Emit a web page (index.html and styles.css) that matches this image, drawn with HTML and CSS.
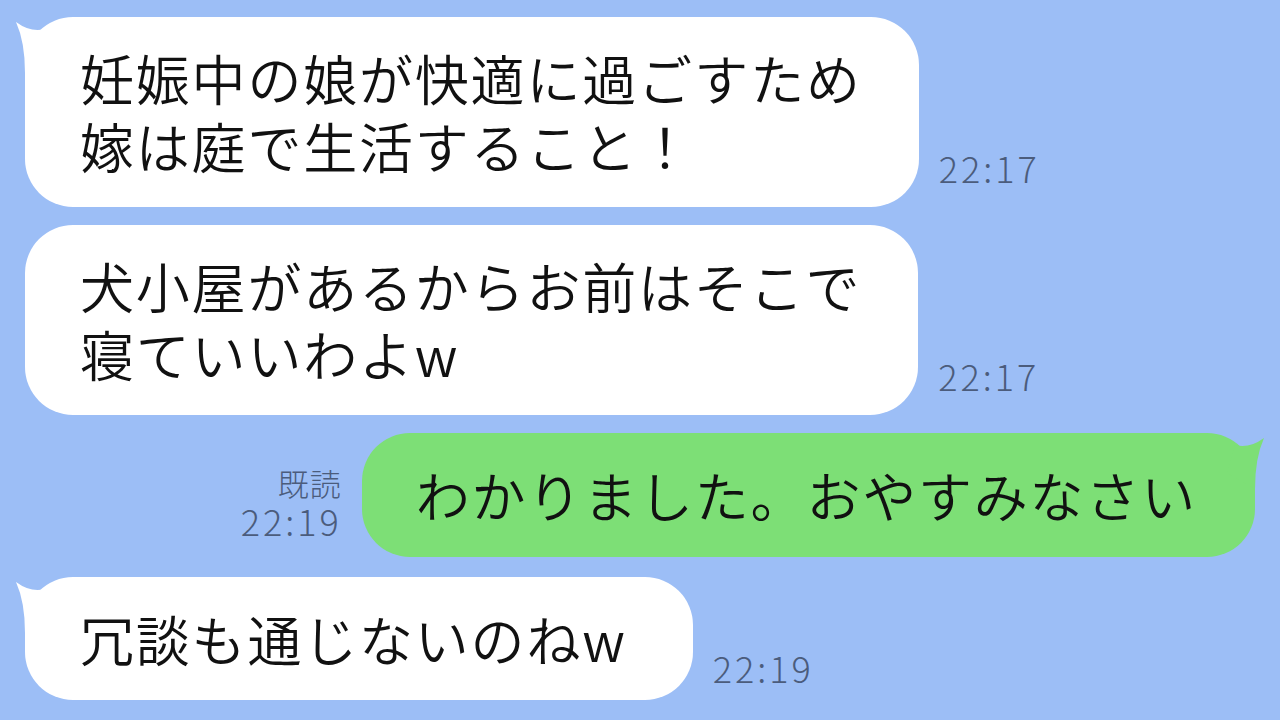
FILE: index.html
```html
<!DOCTYPE html>
<html lang="ja">
<head>
    <meta charset="UTF-8">
    <meta name="viewport" content="width=device-width, initial-scale=1.0">
    <title>トーク</title>
    <link rel="stylesheet" href="styles.css">
</head>
<body>
    <div class="chat">
        <div class="row">
            <div class="bubble">
                <svg class="tail" width="50" height="60" viewBox="0 0 50 60"><path d="M3 5 Q18 16 32 12 L40 40 L12 56 Q12 25 3 5 Z"/></svg>
                妊娠中の娘が快適に過ごすため<br>嫁は庭で生活すること！
            </div>
            <div class="meta">
                <span class="time">22:17</span>
            </div>
        </div>

        <div class="row">
            <div class="bubble">
                犬小屋があるからお前はそこで<br>寝ていいわよw
            </div>
            <div class="meta">
                <span class="time">22:17</span>
            </div>
        </div>

        <div class="row mine">
            <div class="meta">
                <span class="read">既読</span>
                <span class="time">22:19</span>
            </div>
            <div class="bubble">
                <svg class="tail" width="50" height="60" viewBox="0 0 50 60"><path d="M47 5 Q32 16 18 12 L10 40 L38 56 Q38 25 47 5 Z"/></svg>
                わかりました。おやすみなさい
            </div>
        </div>

        <div class="row last">
            <div class="bubble short">
                <svg class="tail" width="50" height="60" viewBox="0 0 50 60"><path d="M3 5 Q18 16 32 12 L40 40 L12 56 Q12 25 3 5 Z"/></svg>
                冗談も通じないのねw
            </div>
            <div class="meta">
                <span class="time">22:19</span>
            </div>
        </div>
    </div>
</body>
</html>
```

FILE: styles.css
```css
body {
    margin: 0;
    background-color: #9cbef6;
    font-family: "Noto Sans CJK JP", "Noto Sans", sans-serif;
    height: 720px;
    overflow: hidden;
}

.chat {
    display: flex;
    flex-direction: column;
    gap: 18px;
    padding: 17px 25px 0 25px;
}

.row {
    display: flex;
    align-items: flex-end;
    gap: 20px;
}

.row.mine {
    justify-content: flex-end;
}

.row.last {
    margin-top: 2px;
}

.bubble {
    position: relative;
    background-color: #ffffff;
    color: #111111;
    border-radius: 48px;
    padding: 27px 57px 27px 55px;
    font-size: 54px;
    font-weight: 350;
    letter-spacing: 1.8px;
    line-height: 68px;
    white-space: nowrap;
}

.bubble.short {
    padding: 28px 66px 27px 55px;
}

.mine .bubble {
    background-color: #7ddf76;
    padding: 28px 58px 28px 54px;
}

.tail {
    position: absolute;
    top: 0;
    left: -12px;
    fill: #ffffff;
}

.mine .tail {
    left: auto;
    right: -12px;
    fill: #7ddf76;
}

.meta {
    display: flex;
    flex-direction: column;
    align-items: flex-end;
    color: #4b5c7c;
    margin-bottom: 21px;
}

.mine .meta {
    margin-bottom: 18px;
}

.last .meta {
    margin-bottom: 14px;
}

.time {
    font-size: 36px;
    font-weight: 300;
    line-height: 38px;
    letter-spacing: 3px;
}

.read {
    font-size: 31px;
    font-weight: 300;
    line-height: 36px;
    letter-spacing: 1px;
}
```
